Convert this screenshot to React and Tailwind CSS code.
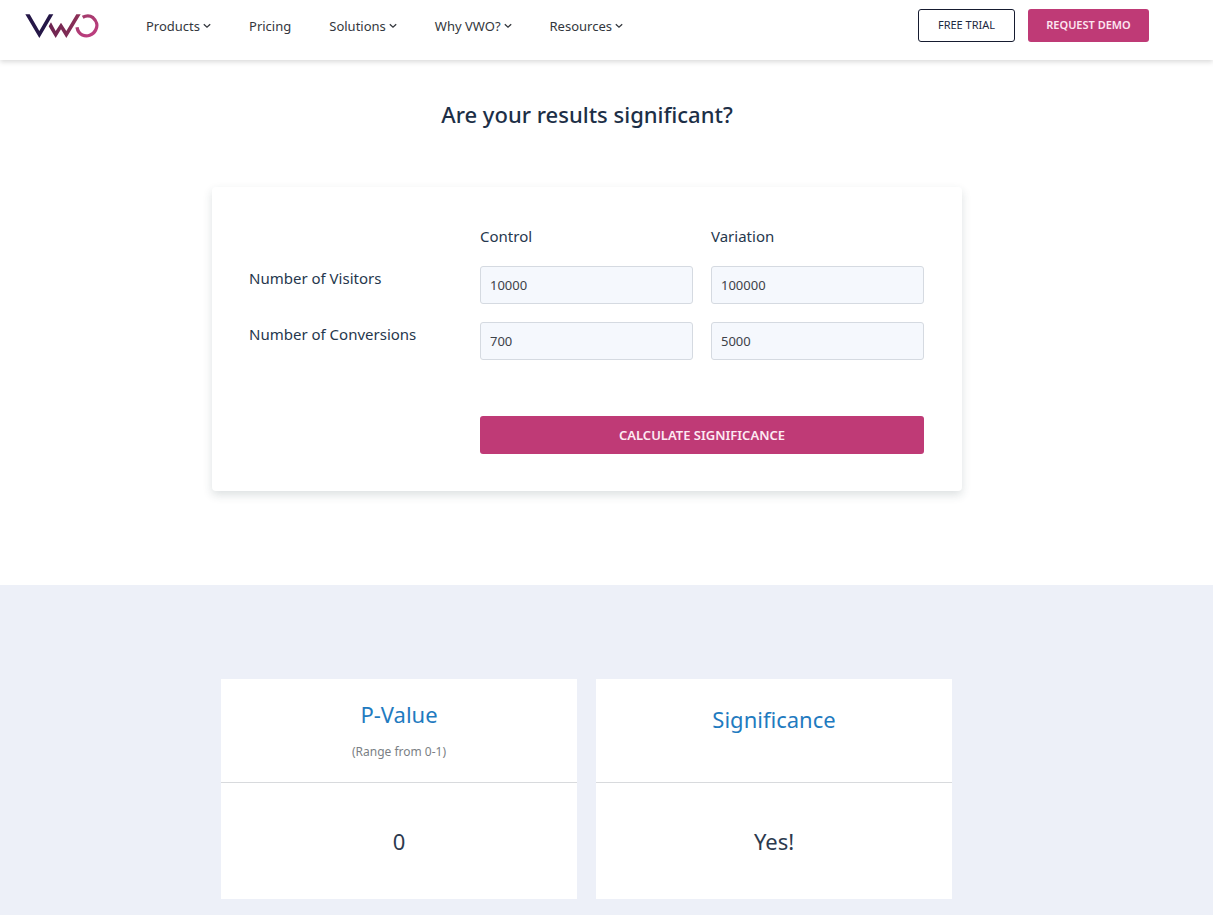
import { useState } from "react";

const navItems = [
  { label: "Products", menu: true },
  { label: "Pricing", menu: false },
  { label: "Solutions", menu: true },
  { label: "Why VWO?", menu: true },
  { label: "Resources", menu: true },
];

function Logo() {
  return (
    <svg viewBox="0 0 220 72" className="h-6 w-[74px]" aria-hidden="true">
      <defs>
        <linearGradient id="w-stroke" x1="0" y1="0" x2="1" y2="0">
          <stop offset="0" stopColor="#6b2450" />
          <stop offset="1" stopColor="#8f3158" />
        </linearGradient>
        <linearGradient id="o-stroke" x1="0" y1="0" x2="0.6" y2="1">
          <stop offset="0" stopColor="#a03a69" />
          <stop offset="1" stopColor="#bb3d7e" />
        </linearGradient>
      </defs>
      <path d="M0 1h13l29 50L71 1h13L42 72z" fill="#251747" />
      <path d="M70 37l7-12 14 26 16-25 16 25 30-50h13l-43 71-16-26-16 26z" fill="url(#w-stroke)" />
      <path
        d="M172 10C183 4 195 5 203 11 214 20 218 35 211 48 203 64 185 69 171 63 162 59 157 52 155 40"
        fill="none"
        stroke="url(#o-stroke)"
        strokeWidth="10"
      />
    </svg>
  );
}

function Chevron() {
  return (
    <svg viewBox="0 0 8 6" className="h-[6px] w-2" fill="none" stroke="currentColor" strokeWidth="1.3" aria-hidden="true">
      <path d="M0.8 1.2L4 4.2l3.2-3" />
    </svg>
  );
}

function Header() {
  return (
    <header className="flex h-[60px] items-start justify-between pr-16 pl-[25px] shadow-[0_2px_5px_rgba(0,0,0,0.15)]">
      <div className="flex items-center pt-[14px]">
        <a href="#home" aria-label="VWO home">
          <Logo />
        </a>
        <nav className="ml-[47px] flex items-center gap-[38px] text-[13px] leading-6 text-[#33373d]">
          {navItems.map((item) => (
            <a key={item.label} href={"#" + item.label} className="flex items-center gap-[3px] whitespace-nowrap">
              {item.label}
              {item.menu && <Chevron />}
            </a>
          ))}
        </nav>
      </div>
      <div className="flex gap-[13px] pt-[9px] text-[11px]">
        <button type="button" className="h-[33px] w-[97px] rounded-[3px] border border-[#161b30] text-[#1c2942]">
          FREE TRIAL
        </button>
        <button type="button" className="h-[33px] w-[121px] rounded-[3px] bg-[#bf3a76] font-semibold text-[#fde6f1]">
          REQUEST DEMO
        </button>
      </div>
    </header>
  );
}

function NumberField({ label, value, onChange }) {
  return (
    <input
      type="text"
      inputMode="numeric"
      aria-label={label}
      value={value}
      onChange={(e) => onChange(e.target.value)}
      className="h-[38px] w-full rounded-[3px] border border-[#d5dae1] bg-[#f5f8fd] px-[9px] text-[13px] text-[#3d4249]"
    />
  );
}

// One-sided tail of the standard normal distribution.
function normalTail(z) {
  const t = 1 / (1 + 0.2316419 * z);
  const poly = t * (0.31938153 + t * (-0.356563782 + t * (1.781477937 + t * (-1.821255978 + t * 1.330274429))));
  return (Math.exp((-z * z) / 2) / Math.sqrt(2 * Math.PI)) * poly;
}

function pValue({ visitorsA, visitorsB, conversionsA, conversionsB }) {
  const a = conversionsA / visitorsA;
  const b = conversionsB / visitorsB;
  const error = Math.sqrt((a * (1 - a)) / visitorsA + (b * (1 - b)) / visitorsB);
  return Number(normalTail(Math.abs(a - b) / error).toFixed(3));
}

function ResultCard({ title, note, value }) {
  return (
    <section className="flex-1 bg-white text-center">
      <div className={note ? "h-[104px] border-b border-[#d8dadd] pt-[19px]" : "h-[104px] border-b border-[#d8dadd] pt-6"}>
        <h2 className="text-[22px] leading-8 text-[#1f7bc0]">{title}</h2>
        {note && <p className="mt-[14px] text-xs leading-4 text-[#7b7f85]">{note}</p>}
      </div>
      <p className="flex h-[116px] items-center justify-center text-[22px] text-[#2c3a4e]">{value}</p>
    </section>
  );
}

export default function App() {
  const [form, setForm] = useState({
    visitorsA: "10000",
    visitorsB: "100000",
    conversionsA: "700",
    conversionsB: "5000",
  });
  const [result, setResult] = useState(() => pValue(form));
  const update = (key) => (value) => setForm({ ...form, [key]: value });

  return (
    <div className="flex min-h-screen flex-col bg-white font-['Noto_Sans','Open_Sans',sans-serif]">
      <Header />
      <main className="flex flex-1 flex-col">
        <div className="pt-[38px] pr-[39px] pb-[94px]">
          <h1 className="text-center text-[22px] leading-8 font-medium text-[#1d2f47]">Are your results significant?</h1>
          <form
            onSubmit={(e) => {
              e.preventDefault();
              setResult(pValue(form));
            }}
            className="mx-auto mt-[57px] max-w-[750px] rounded-[4px] py-[37px] pr-[38px] pl-[37px] text-[15px] leading-6 text-[#26374d] shadow-[0_4px_10px_rgba(40,60,70,0.16)]"
          >
            <div className="grid grid-cols-3 items-start gap-[18px]">
              <span className="col-start-2">Control</span>
              <span>Variation</span>
              <span>Number of Visitors</span>
              <NumberField label="Control visitors" value={form.visitorsA} onChange={update("visitorsA")} />
              <NumberField label="Variation visitors" value={form.visitorsB} onChange={update("visitorsB")} />
              <span>Number of Conversions</span>
              <NumberField label="Control conversions" value={form.conversionsA} onChange={update("conversionsA")} />
              <NumberField label="Variation conversions" value={form.conversionsB} onChange={update("conversionsB")} />
              <button
                type="submit"
                className="col-span-2 col-start-2 mt-[38px] h-[38px] rounded-[3px] bg-[#bf3a76] text-[13px] font-semibold text-[#fdeaf3]"
              >
                CALCULATE SIGNIFICANCE
              </button>
            </div>
          </form>
        </div>
        <div className="flex-1 bg-[#edf0f8] pt-[94px] pr-10 pb-4">
          <div className="mx-auto flex max-w-[731px] gap-[19px]">
            <ResultCard title="P-Value" note="(Range from 0-1)" value={result} />
            <ResultCard title="Significance" value={result < 0.05 ? "Yes!" : "No"} />
          </div>
        </div>
      </main>
    </div>
  );
}
